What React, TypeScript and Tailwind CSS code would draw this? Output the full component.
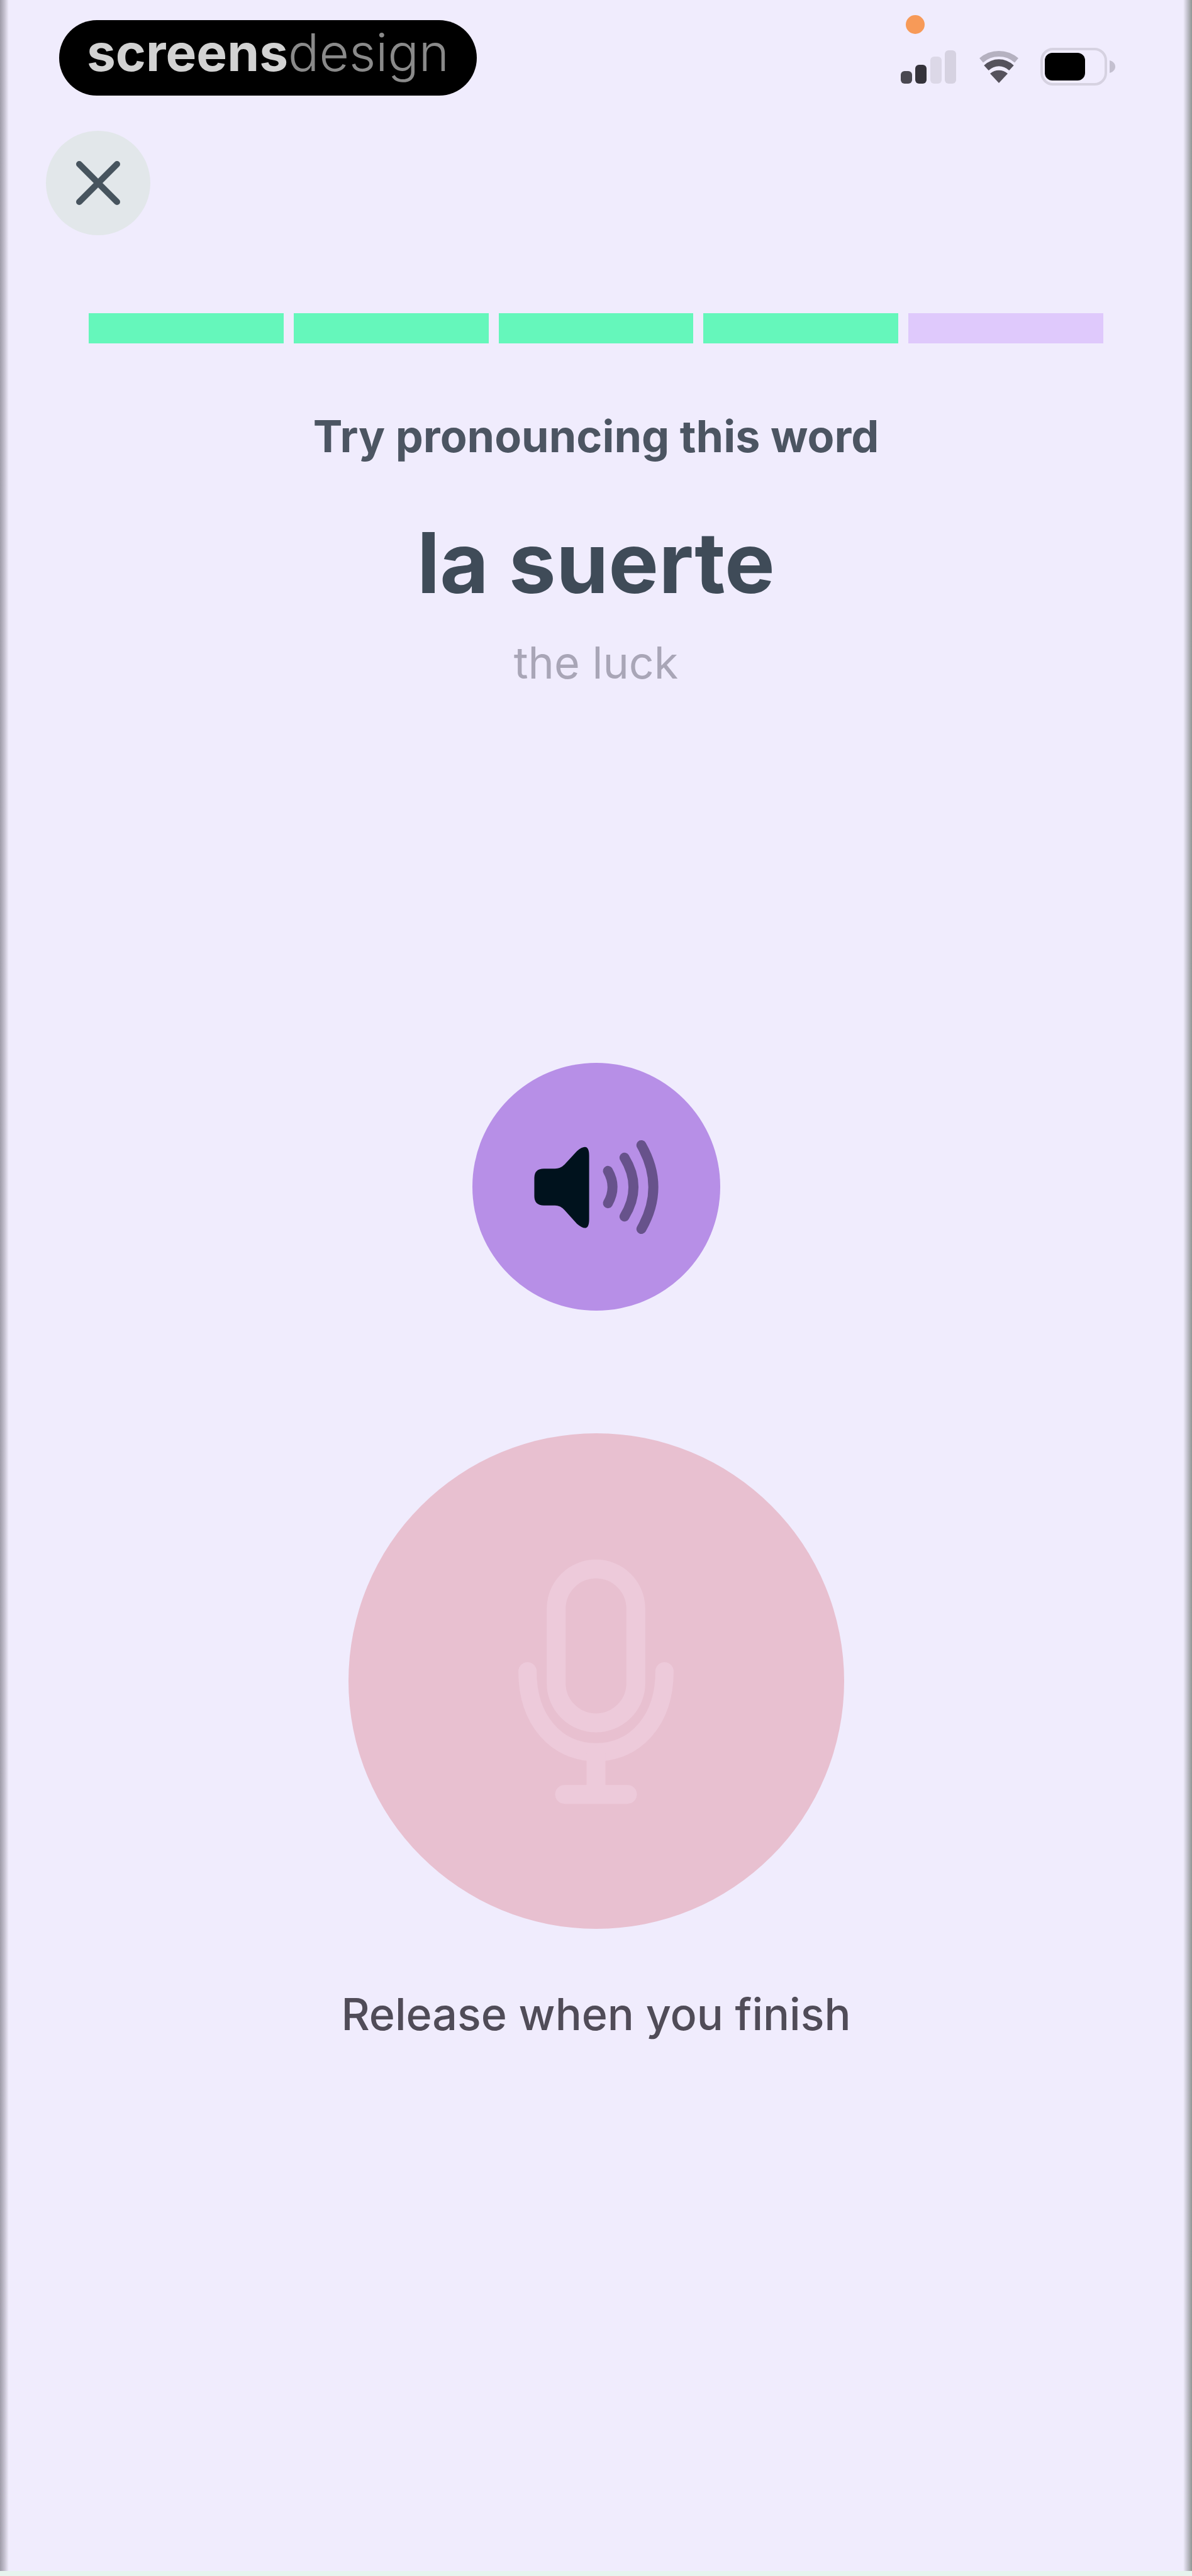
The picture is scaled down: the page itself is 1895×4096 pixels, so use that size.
import { useState } from "react";
import clsx from "clsx";

const TOTAL_STEPS = 5;

const exercise = {
  word: "la suerte",
  translation: "the luck",
  step: 4,
};

function SignalIcon() {
  return (
    <svg className="w-[92px] h-[58px]" viewBox="0 0 92 58" aria-hidden="true">
      <rect x="2" y="36" width="18" height="20" rx="6" fill="#4a4851" />
      <rect x="25" y="26" width="18" height="30" rx="6" fill="#35333b" />
      <rect x="49" y="13" width="18" height="43" rx="6" fill="#dcd8e7" />
      <rect x="72" y="3" width="18" height="53" rx="6" fill="#d6d2e1" />
    </svg>
  );
}

function WifiIcon() {
  return (
    <svg className="w-[68px] h-[58px]" viewBox="0 0 68 58" aria-hidden="true">
      <path d="M6 19 C22 5 46 5 62 19" fill="none" stroke="#b5b1c0" strokeWidth="9" />
      <path d="M14 31 C26 20 42 20 54 31" fill="none" stroke="#55525c" strokeWidth="11" />
      <path d="M20 40 C28 33 40 33 48 40 L34 55 Z" fill="#55525c" />
    </svg>
  );
}

function BatteryIcon() {
  return (
    <svg className="w-[122px] h-[60px]" viewBox="0 0 122 60" aria-hidden="true">
      <rect x="2" y="2" width="102" height="56" rx="18" fill="none" stroke="#d6d2e1" strokeWidth="4" />
      <rect x="7" y="8" width="64" height="44" rx="12" fill="#000000" />
      <path d="M110 20 C122 23 122 37 110 40 Z" fill="#c4c0d0" />
    </svg>
  );
}

function CloseIcon() {
  return (
    <svg className="size-[72px]" viewBox="0 0 72 72" aria-hidden="true">
      <path d="M6 6 L66 66 M66 6 L6 66" stroke="#47545e" strokeWidth="10" strokeLinecap="round" />
    </svg>
  );
}

function SpeakerIcon() {
  return (
    <svg className="w-[208px] h-[155px]" viewBox="430 525 710 530" aria-hidden="true">
      <path
        d="M500 690 H560 Q590 690 612 668 L680 594 Q746 540 746 620 V965 Q746 1045 680 990 L612 915 Q590 890 560 890 H500 Q448 890 448 840 V740 Q448 690 500 690 Z"
        fill="#00121d"
      />
      <g fill="none" stroke="#67528b" strokeWidth="54" strokeLinecap="round">
        <path d="M848 702 Q898 790 848 878" />
        <path d="M938 630 Q1036 790 938 950" />
        <path d="M1030 562 Q1160 790 1030 1018" />
      </g>
    </svg>
  );
}

function MicIcon() {
  return (
    <svg className="w-[263px] h-[397px]" viewBox="540 430 490 740" fill="none" stroke="#edcada" strokeLinecap="round" aria-hidden="true">
      <rect x="667" y="467" width="236" height="456" rx="118" strokeWidth="56" />
      <path d="M582 770 C582 915 668 1010 785 1010 C902 1010 988 915 988 770" strokeWidth="54" />
      <path d="M785 1018 V1130" strokeWidth="56" />
      <path d="M692 1135 H878" strokeWidth="56" />
    </svg>
  );
}

export default function App() {
  const [recording, setRecording] = useState(true);

  return (
    <div className="min-h-screen flex flex-col font-['Inter',sans-serif] bg-[linear-gradient(to_right,#9e9ba8_0px,#c4c0cf_7px,#f0ecfd_14px,#f0ecfd_calc(100%-14px),#b9b9c2_calc(100%-6px),#8f9693_100%)]">
      <header className="pt-8 pl-[94px] pr-[119px] flex items-start justify-between">
        <div className="h-30 w-[664px] rounded-full bg-black flex justify-center text-[82px] leading-[104px]">
          <span className="font-bold text-[#d2d2d2]">screens</span>
          <span className="font-light text-[#8a8a8a]">design</span>
        </div>
        <div className="relative flex items-center gap-8 pt-11">
          <span className="absolute -top-2 left-2.5 size-[30px] rounded-full bg-[#f79a58]" />
          <SignalIcon />
          <WifiIcon />
          <BatteryIcon />
        </div>
      </header>

      <main className="flex-1 flex flex-col items-center pt-14">
        <button
          type="button"
          aria-label="Close"
          className="self-start ml-[73px] size-[166px] rounded-full bg-[#e2e7ea] flex items-center justify-center"
        >
          <CloseIcon />
        </button>

        <div className="mt-31 w-full px-[141px] flex gap-4">
          {Array.from({ length: TOTAL_STEPS }, (_, i) => (
            <div key={i} className={clsx("h-12 flex-1", i < exercise.step ? "bg-[#65f7bb]" : "bg-[#dfc9fc]")} />
          ))}
        </div>

        <h2 className="mt-25 text-[70px] leading-24 font-bold text-[#4c5562]">Try pronouncing this word</h2>
        <h1 className="mt-18 text-[134px] leading-40 font-bold text-[#3f4b58]">{exercise.word}</h1>
        <p className="mt-8 text-[70px] leading-24 text-[#a9a6b7]">{exercise.translation}</p>

        <button
          type="button"
          aria-label="Listen"
          className="mt-147 size-[394px] rounded-full bg-[#b78fe7] flex items-center justify-center"
        >
          <SpeakerIcon />
        </button>

        <button
          type="button"
          aria-label="Record"
          onPointerDown={() => setRecording(true)}
          onPointerUp={() => setRecording(false)}
          className="mt-[195px] size-[788px] rounded-full bg-[#e8c0d0] flex items-center justify-center"
        >
          <MicIcon />
        </button>

        <p className="mt-22 text-[70px] leading-24 font-medium text-[#504c58]">
          {recording ? "Release when you finish" : "Hold to speak"}
        </p>
      </main>

      <div className="h-2 bg-[#e6f4ee]" />
    </div>
  );
}
